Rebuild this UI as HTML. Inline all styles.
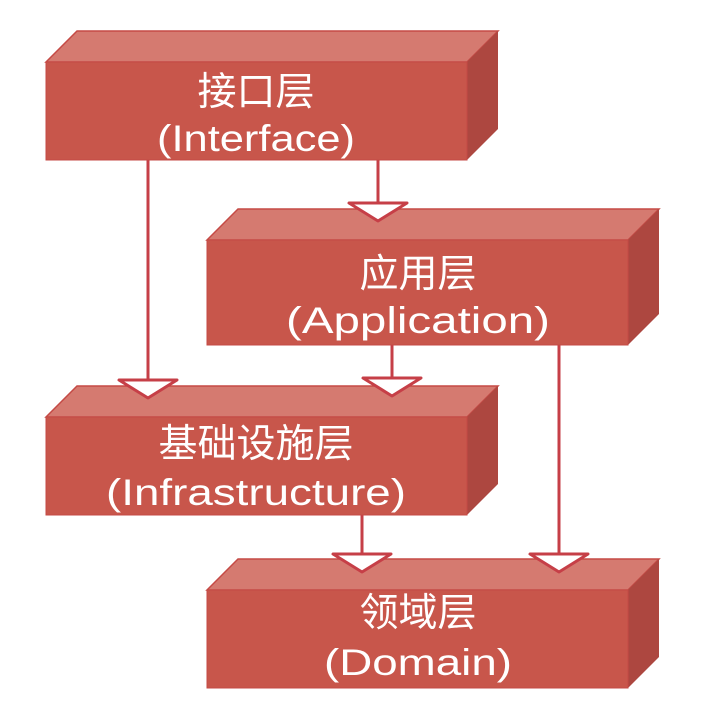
<!DOCTYPE html>
<html><head><meta charset="utf-8"><style>
body{margin:0;background:#fff;width:727px;height:718px;overflow:hidden}
svg{display:block}
text{font-family:"Liberation Sans","Noto Sans CJK SC",sans-serif;fill:#fff;text-anchor:middle}
.c{font-size:39px}
.e{font-size:37px}
</style></head><body>
<svg width="727" height="718" viewBox="0 0 727 718">
<defs>
<g id="box">
<polygon points="0,31 31,0 452,0 421,31" fill="#d57a70" stroke="#c54a45" stroke-width="1.5"/>
<polygon points="421,31 452,0 452,98 421,129" fill="#ad4740"/>
<rect x="0" y="31" width="421" height="98" fill="#c8564b" stroke="#c54a45" stroke-width="1"/>
</g>
<g id="box2">
<polygon points="0,31 31,0 452,0 421,31" fill="#d57a70" stroke="#c54a45" stroke-width="1.5"/>
<polygon points="421,31 452,0 452,105 421,136" fill="#ad4740"/>
<rect x="0" y="31" width="421" height="105" fill="#c8564b" stroke="#c54a45" stroke-width="1"/>
</g>
</defs>
<g stroke="#c63f47" stroke-width="3" fill="#fff" stroke-linejoin="round">
<line x1="148" y1="160" x2="148" y2="382"/>
<line x1="378" y1="160" x2="378" y2="203"/>
<line x1="392" y1="345" x2="392" y2="380"/>
<line x1="559" y1="345" x2="559" y2="556"/>
<line x1="362" y1="515" x2="362" y2="556"/>
</g>
<use href="#box" x="46" y="31"/>
<use href="#box2" x="207" y="209"/>
<use href="#box" x="46" y="386"/>
<use href="#box" x="207" y="559"/>
<g stroke="#c63f47" stroke-width="3" fill="#fff" stroke-linejoin="round">
<polygon points="349,203 407,203 378,221"/>
<polygon points="119,380 177,380 148,398"/>
<polygon points="363,378 421,378 392,396"/>
<polygon points="333,554 391,554 362,572"/>
<polygon points="530,554 588,554 559,572"/>
</g>
<text class="c" x="256" y="105">接口层</text>
<text class="e" x="256" y="151" textLength="198" lengthAdjust="spacingAndGlyphs">(Interface)</text>
<text class="c" x="418" y="287">应用层</text>
<text class="e" x="418" y="333" textLength="264" lengthAdjust="spacingAndGlyphs">(Application)</text>
<text class="c" x="256" y="457">基础设施层</text>
<text class="e" x="256" y="505" textLength="300" lengthAdjust="spacingAndGlyphs">(Infrastructure)</text>
<text class="c" x="418" y="626">领域层</text>
<text class="e" x="418" y="675" textLength="188" lengthAdjust="spacingAndGlyphs">(Domain)</text>
</svg>
</body></html>
